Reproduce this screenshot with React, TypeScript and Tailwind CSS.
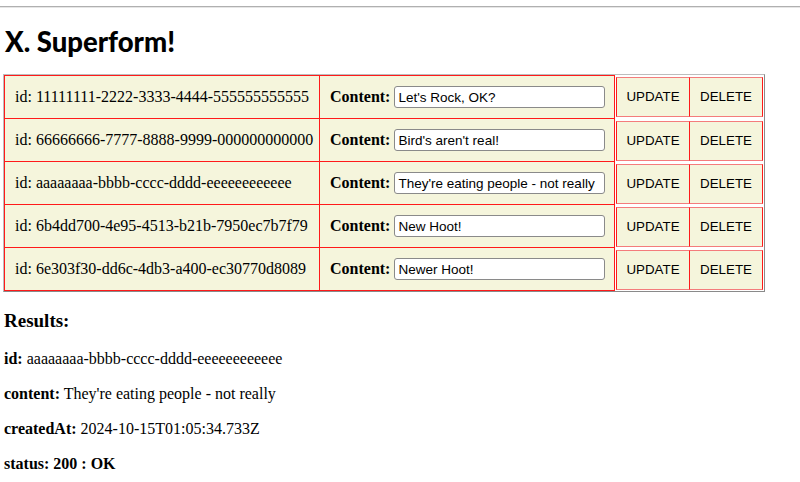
import { useState } from "react";

type Hoot = { id: string; content: string };

const hoots: Hoot[] = [
    { id: "11111111-2222-3333-4444-555555555555", content: "Let's Rock, OK?" },
    { id: "66666666-7777-8888-9999-000000000000", content: "Bird's aren't real!" },
    { id: "aaaaaaaa-bbbb-cccc-dddd-eeeeeeeeeeee", content: "They're eating people - not really" },
    { id: "6b4dd700-4e95-4513-b21b-7950ec7b7f79", content: "New Hoot!" },
    { id: "6e303f30-dd6c-4db3-a400-ec30770d8089", content: "Newer Hoot!" },
];

const serif = "font-['Liberation_Serif','Times_New_Roman',serif]";
const sans = "font-['Liberation_Sans',Arial,sans-serif]";

function HootRow({ hoot, first }: { hoot: Hoot; first: boolean }) {
    const [value, setValue] = useState(hoot.content);
    return (
        <div className={`flex ${first ? "h-[44px]" : "h-[43px]"}`}>
            <div
                className={`flex w-[316px] items-center border-x border-b border-x-[#ff1a1a] border-b-[#ff1a1a] border-t-[#ff1a1a] bg-[#f5f5dc] pl-[10px] text-[16px] text-black ${serif} ${
                    first ? "border-t" : ""
                }`}
            >
                id: {hoot.id}
            </div>
            <div
                className={`flex w-[295px] items-center border-r border-b border-r-[#ff1a1a] border-b-[#ff1a1a] border-t-[#ff1a1a] bg-[#f5f5dc] pl-[10px] ${
                    first ? "border-t" : ""
                }`}
            >
                <span className={`mr-[4px] text-[16px] font-bold text-black ${serif}`}>Content:</span>
                <input
                    className={`h-[22px] w-[211px] rounded-[3px] border border-[#8a8a8a] bg-white px-[3px] text-[13.5px] text-black ${sans}`}
                    value={value}
                    onChange={(event) => setValue(event.target.value)}
                />
            </div>
            <div className="flex flex-1 items-center bg-white pl-px">
                <button
                    className={`h-[40px] w-[74px] border border-x-[#ff1a1a] border-y-[#f47c7c] bg-[#f5f5dc] text-[13.333px] text-black ${sans}`}
                >
                    UPDATE
                </button>
                <button
                    className={`-ml-px h-[40px] w-[74px] border border-x-[#ff1a1a] border-y-[#f47c7c] bg-[#f5f5dc] text-[13.333px] text-black ${sans}`}
                >
                    DELETE
                </button>
            </div>
        </div>
    );
}

export default function App() {
    return (
        <div className="min-h-[482px] bg-white pt-[6px] text-black">
            <div className="h-[2px] w-full border-t border-[#b0b0b0] bg-[#e6e6e6]" />
            <div className="px-[3px]">
                <h1 className="mt-[18px] mb-[16px] pl-[2px] font-['Lato',sans-serif] text-[27.5px] leading-[32px] font-black">
                    X. Superform!
                </h1>
                <div className="w-[762px] border border-[#bdbdbd] border-r-[#8a8a8a] border-b-[#8a8a8a]">
                    {hoots.map((hoot, index) => (
                        <HootRow key={hoot.id} hoot={hoot} first={index === 0} />
                    ))}
                </div>
                <div className={`${serif} pl-px`}>
                    <h3 className="mt-[18px] mb-[17px] text-[19px] leading-[22px] font-bold">Results:</h3>
                    <p className="mb-[16px] text-[16px] leading-[19px]">
                        <b>id:</b> aaaaaaaa-bbbb-cccc-dddd-eeeeeeeeeeee
                    </p>
                    <p className="mb-[16px] text-[16px] leading-[19px]">
                        <b>content:</b> They're eating people - not really
                    </p>
                    <p className="mb-[16px] text-[16px] leading-[19px]">
                        <b>createdAt:</b> 2024-10-15T01:05:34.733Z
                    </p>
                    <p className="mb-[16px] text-[16px] leading-[19px]">
                        <b>status: 200 : OK</b>
                    </p>
                </div>
            </div>
        </div>
    );
}
